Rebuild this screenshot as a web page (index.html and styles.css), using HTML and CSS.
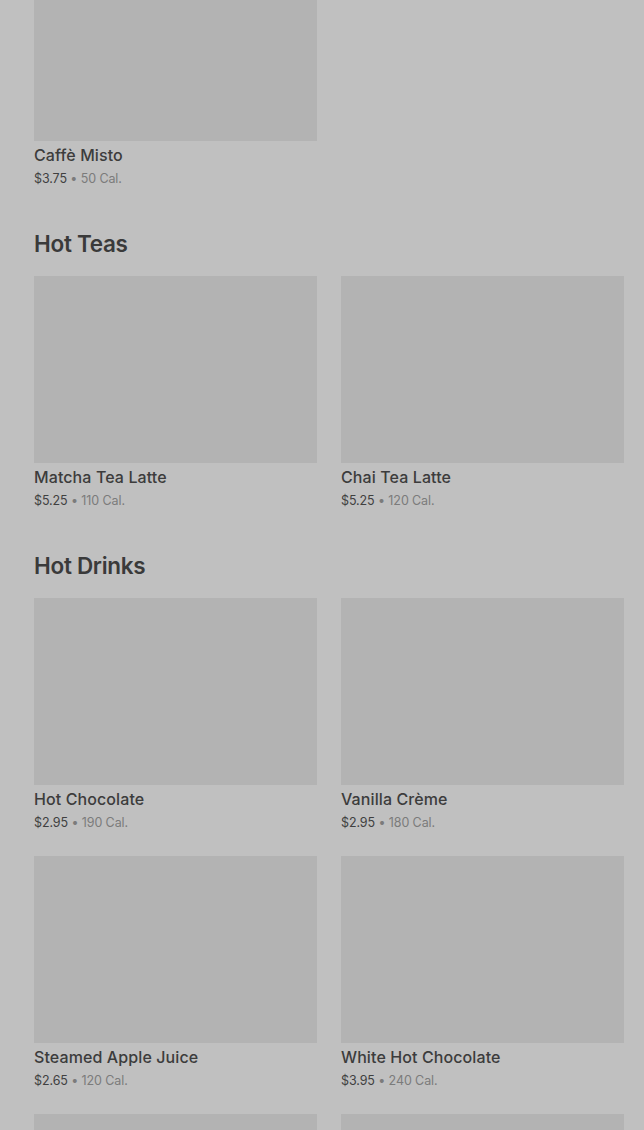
FILE: index.html
```html
<!DOCTYPE html>
<html lang="en">
<head>
<meta charset="utf-8">
<title>Menu</title>
<link rel="stylesheet" href="styles.css">
</head>
<body>
<main class="page">
  <section class="section">
    <div class="grid">
      <div class="card">
        <div class="card-img"></div>
        <div class="card-title">Caffè Misto</div>
        <div class="card-meta"><span class="price">$3.75</span> • 50 Cal.</div>
      </div>
    </div>
  </section>
  <section class="section">
    <h2 class="heading">Hot Teas</h2>
    <div class="grid">
      <div class="card">
        <div class="card-img"></div>
        <div class="card-title">Matcha Tea Latte</div>
        <div class="card-meta"><span class="price">$5.25</span> • 110 Cal.</div>
      </div>
      <div class="card">
        <div class="card-img"></div>
        <div class="card-title">Chai Tea Latte</div>
        <div class="card-meta"><span class="price">$5.25</span> • 120 Cal.</div>
      </div>
    </div>
  </section>
  <section class="section">
    <h2 class="heading">Hot Drinks</h2>
    <div class="grid">
      <div class="card">
        <div class="card-img"></div>
        <div class="card-title">Hot Chocolate</div>
        <div class="card-meta"><span class="price">$2.95</span> • 190 Cal.</div>
      </div>
      <div class="card">
        <div class="card-img"></div>
        <div class="card-title">Vanilla Crème</div>
        <div class="card-meta"><span class="price">$2.95</span> • 180 Cal.</div>
      </div>
      <div class="card">
        <div class="card-img"></div>
        <div class="card-title">Steamed Apple Juice</div>
        <div class="card-meta"><span class="price">$2.65</span> • 120 Cal.</div>
      </div>
      <div class="card">
        <div class="card-img"></div>
        <div class="card-title">White Hot Chocolate</div>
        <div class="card-meta"><span class="price">$3.95</span> • 240 Cal.</div>
      </div>
      <div class="card">
        <div class="card-img"></div>
      </div>
      <div class="card">
        <div class="card-img"></div>
      </div>
    </div>
  </section>
</main>
</body>
</html>
```

FILE: styles.css
```css
html, body {
  margin: 0;
  padding: 0;
  background: #c0c0c0;
  overflow: hidden;
}
body {
  font-family: Inter, "Noto Sans", "Liberation Sans", sans-serif;
  color: #3b3b3b;
}
.page {
  margin-top: -46px;
  padding: 0 20px 0 34px;
  display: flex;
  flex-direction: column;
  gap: 41px;
}
.heading {
  margin: 0 0 17px;
  font-size: 22.5px;
  line-height: 30px;
  font-weight: 600;
  letter-spacing: -0.3px;
  color: #3a3a3a;
}
.grid {
  display: grid;
  grid-template-columns: 283px 283px;
  column-gap: 24px;
  row-gap: 24px;
}
.card {
  display: flex;
  flex-direction: column;
}
.card-img {
  height: 187px;
  background: #b3b3b3;
}
.card-title {
  margin-top: 4px;
  font-size: 16px;
  line-height: 20px;
  font-weight: 500;
  letter-spacing: 0.1px;
  color: #3c3c3c;
}
.card-meta {
  margin-top: 5px;
  font-size: 12.5px;
  line-height: 18px;
  letter-spacing: -0.1px;
  color: #7b7b7b;
}
.price {
  color: #404040;
}
```
